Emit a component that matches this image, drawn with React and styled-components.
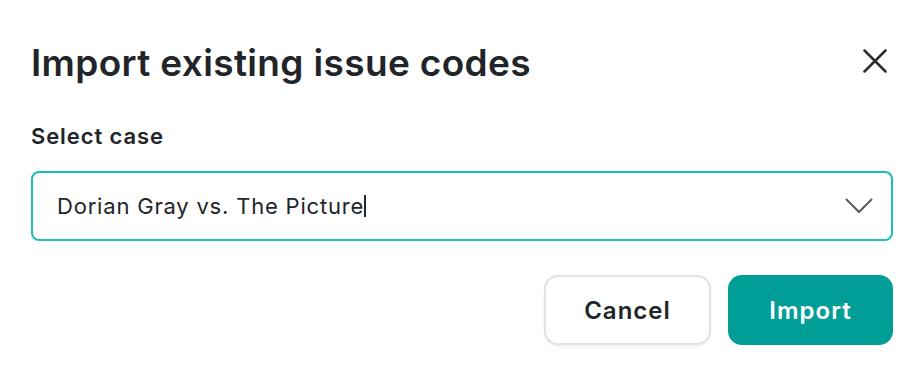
import React from 'react';
import styled, { createGlobalStyle } from 'styled-components';

const GlobalStyle = createGlobalStyle`
  body {
    margin: 0;
    background: #ffffff;
    font-family: Inter, "Noto Sans", sans-serif;
    color: #212529;
  }
`;

const Dialog = styled.div`
  width: 921px;
  height: 371px;
  box-sizing: border-box;
  padding: 37px 28px 0 31px;
  display: flex;
  flex-direction: column;
`;

const Header = styled.div`
  display: flex;
  align-items: center;
  justify-content: space-between;
`;

const Title = styled.h1`
  margin: 0;
  font-size: 37px;
  font-weight: 600;
  line-height: 52px;
  letter-spacing: 0.35px;
`;

const CloseButton = styled.button`
  border: 0;
  background: none;
  padding: 0;
  margin: -4px 6px 0 0;
  width: 24px;
  height: 24px;
  display: flex;
  align-items: center;
  justify-content: center;
  cursor: pointer;
  color: #2a2e33;
`;

const Label = styled.label`
  margin-top: 33px;
  font-size: 22px;
  font-weight: 600;
  line-height: 28px;
  letter-spacing: 0.9px;
`;

const SelectBox = styled.div`
  margin-top: 21px;
  height: 70px;
  box-sizing: border-box;
  border: 2px solid #1bbfb8;
  border-radius: 8px;
  display: flex;
  align-items: center;
  justify-content: space-between;
  padding: 0 18px 0 24px;
`;

const Value = styled.span`
  font-size: 22px;
  font-weight: 400;
  letter-spacing: 0.8px;
  display: flex;
  align-items: center;
`;

const Caret = styled.span`
  display: inline-block;
  width: 2px;
  height: 22px;
  background: #212529;
  margin-left: 0;
`;

const Actions = styled.div`
  margin-top: 34px;
  display: flex;
  justify-content: flex-end;
  gap: 17px;
`;

const Button = styled.button`
  height: 70px;
  width: ${(p) => p.$width}px;
  box-sizing: border-box;
  border-radius: 14px;
  font-family: Inter, "Noto Sans", sans-serif;
  font-size: 24px;
  font-weight: 600;
  letter-spacing: 1px;
  cursor: pointer;
  border: ${(p) => (p.$primary ? '0' : '2px solid #e0e2e6')};
  background: ${(p) => (p.$primary ? '#009e96' : '#ffffff')};
  color: ${(p) => (p.$primary ? '#ffffff' : '#212529')};
  box-shadow: ${(p) => (p.$primary ? 'none' : '0 2px 3px rgba(0,0,0,0.06)')};
`;

export default function App() {
  return (
    <>
      <GlobalStyle />
      <Dialog>
        <Header>
          <Title>Import existing issue codes</Title>
          <CloseButton aria-label="Close">
            <svg width="24" height="24" viewBox="0 0 24 24" fill="none">
              <path d="M1.5 1.5L22.5 22.5M22.5 1.5L1.5 22.5" stroke="currentColor" strokeWidth="2.5" strokeLinecap="round" />
            </svg>
          </CloseButton>
        </Header>
        <Label>Select case</Label>
        <SelectBox>
          <Value>
            Dorian Gray vs. The Picture
            <Caret />
          </Value>
          <svg width="28" height="16" viewBox="0 0 28 16" fill="none">
            <path d="M1.5 1.5L14 14L26.5 1.5" stroke="#555a60" strokeWidth="2" strokeLinecap="round" strokeLinejoin="round" />
          </svg>
        </SelectBox>
        <Actions>
          <Button $width={167}>Cancel</Button>
          <Button $primary $width={165}>Import</Button>
        </Actions>
      </Dialog>
    </>
  );
}
